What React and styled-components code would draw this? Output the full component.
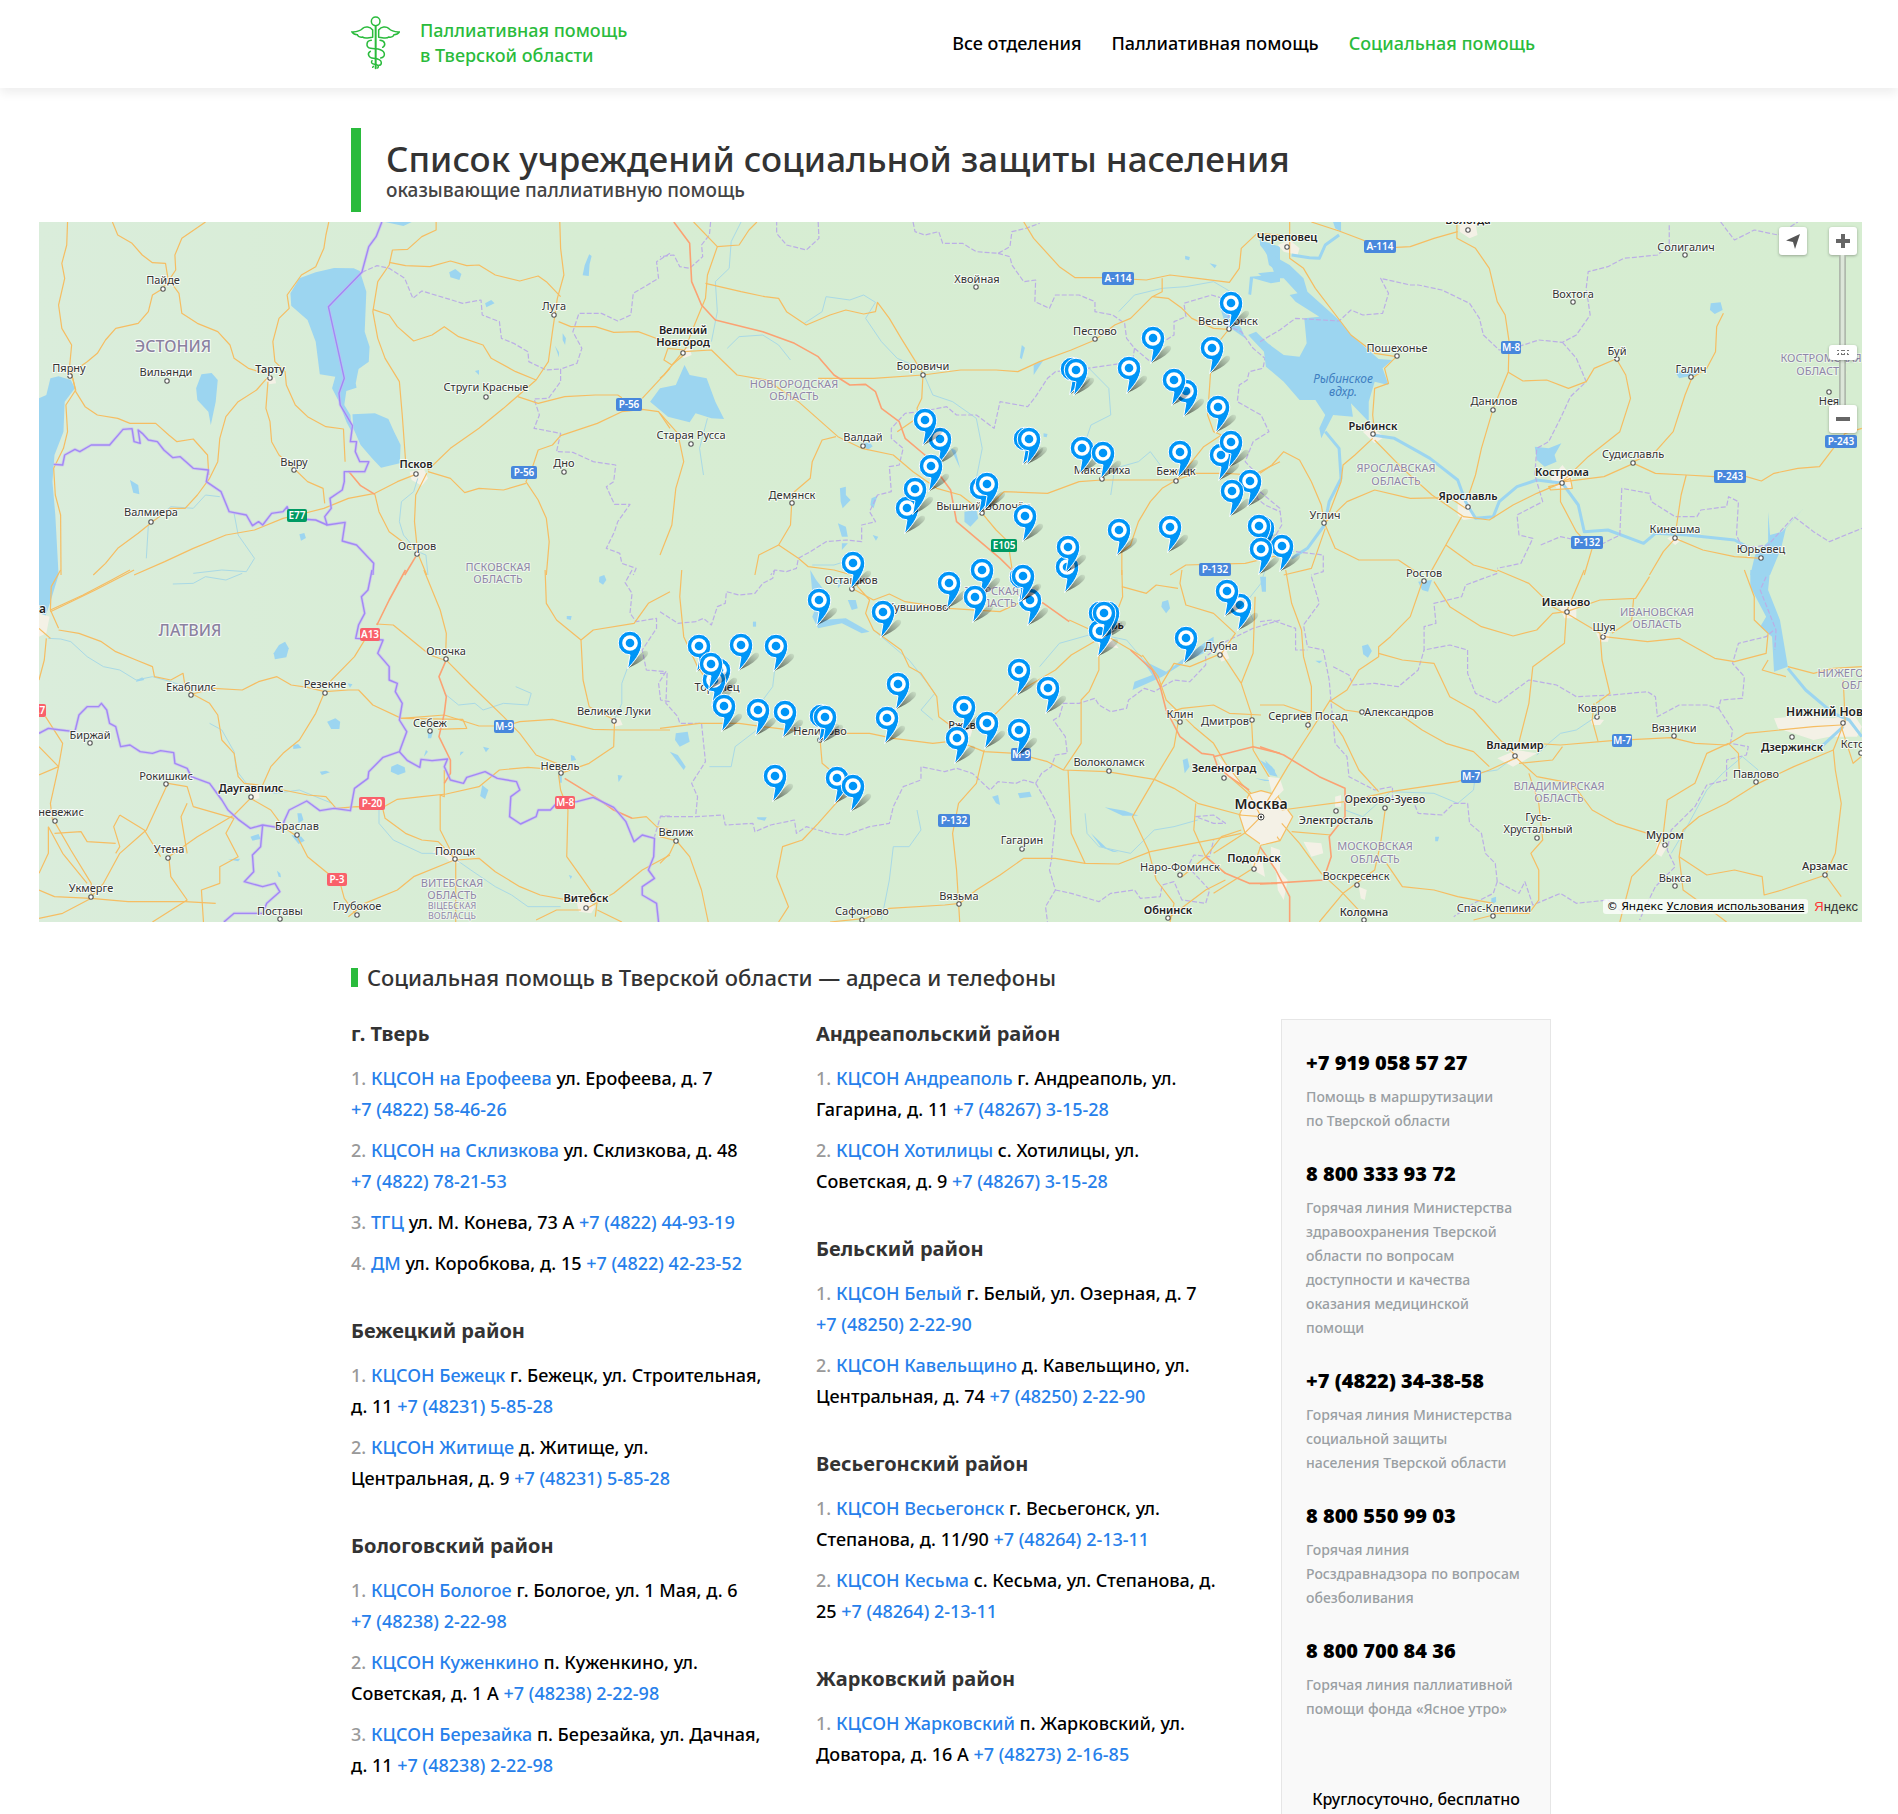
import React, { useState } from "react";
import styled, { createGlobalStyle } from "styled-components";

const GlobalStyle = createGlobalStyle`
  * {
    box-sizing: border-box;
  }
  body {
    margin: 0;
    background: #fff;
    color: #000;
    font-family: "Noto Sans", "Open Sans", sans-serif;
    font-size: 18px;
    font-weight: 500;
  }
  h1, h2, h3, p, ol {
    margin: 0;
    padding: 0;
  }
  a {
    color: inherit;
    text-decoration: none;
  }
`;

const Header = styled.header`
  background: #fff;
  box-shadow: 0 5px 10px rgba(0, 0, 0, 0.07);
`;

const Container = styled.div`
  max-width: 1204px;
  margin: 0 auto;
  padding-left: 4px;
`;

const HeaderRow = styled(Container)`
  display: flex;
  align-items: center;
  justify-content: space-between;
  min-height: 88px;
  padding-bottom: 2px;
`;

const Brand = styled.a`
  display: flex;
  align-items: center;
  gap: 20px;
  color: #2abb3c;
  line-height: 25px;
`;

const BrandMark = styled.svg`
  width: 49px;
  height: 54px;
`;

const Nav = styled.nav`
  display: flex;
  gap: 30px;
  padding-right: 16px;
`;

const NavLink = styled.a`
  color: ${(props) => (props.$active ? "#2abb3c" : "#000")};
`;

const PageTitle = styled.div`
  margin-top: 40px;
  padding: 10px 0 8px 25px;
  border-left: 10px solid #2abb3c;
  height: 84px;
`;

const Title = styled.h1`
  color: #333;
  font-size: 35px;
  font-weight: 500;
  line-height: 42px;
`;

const Subtitle = styled.p`
  color: #444;
  font-size: 19px;
  line-height: 20px;
`;

const MapBox = styled.section`
  position: relative;
  display: flex;
  justify-content: center;
  height: 700px;
  margin: 10px 36px 0 39px;
  overflow: hidden;
  background: #d7edd3;
`;

const MapCanvas = styled.div`
  position: relative;
  flex: none;
  width: 1823px;
  height: 700px;
`;

const MapSvg = styled.svg`
  display: block;
  width: 1823px;
  height: 700px;
`;

const MapText = styled.text`
  font-family: "Noto Sans", sans-serif;
  font-size: ${(props) => props.$size}px;
  font-weight: ${(props) => props.$weight};
  font-style: ${(props) => (props.$italic ? "italic" : "normal")};
  fill: ${(props) => props.$color};
  text-anchor: middle;
  paint-order: stroke;
  stroke: ${(props) => props.$halo};
  stroke-width: 2px;
  stroke-linejoin: round;
`;

const Pin = styled.button`
  position: absolute;
  width: 42px;
  height: 40px;
  padding: 0;
  border: none;
  background: none;
  cursor: pointer;
`;

const MapControls = styled.div`
  position: absolute;
  top: 5px;
  right: 5px;
  display: flex;
  align-items: flex-start;
  gap: 22px;
`;

const ZoomControl = styled.div`
  display: flex;
  flex-direction: column;
  width: 28px;
`;

const MapButton = styled.button`
  display: flex;
  align-items: center;
  justify-content: center;
  width: 28px;
  height: 28px;
  padding: 0;
  border: none;
  border-radius: 3px;
  background: #fff;
  box-shadow: 0 1px 3px rgba(0, 0, 0, 0.3);
  cursor: pointer;
`;

const ZoomSlider = styled.input`
  appearance: none;
  writing-mode: vertical-lr;
  direction: rtl;
  width: 28px;
  height: 150px;
  margin: 0;
  background: linear-gradient(
    to right,
    transparent 10px,
    #a9b3a6 10px,
    #c2cbbf 12px,
    #dce6d9 12px,
    #dce6d9 15px,
    #c2cbbf 15px,
    #a9b3a6 17px,
    transparent 17px
  );
  &::-webkit-slider-thumb {
    appearance: none;
    width: 28px;
    height: 15px;
    border: none;
    border-radius: 3px;
    background:
      radial-gradient(#777 1px, transparent 1px) 8px 4px / 3px 3px no-repeat,
      radial-gradient(#777 1px, transparent 1px) 11px 4px / 3px 3px no-repeat,
      radial-gradient(#777 1px, transparent 1px) 14px 4px / 3px 3px no-repeat,
      radial-gradient(#777 1px, transparent 1px) 17px 4px / 3px 3px no-repeat,
      radial-gradient(#777 1px, transparent 1px) 8px 8px / 3px 3px no-repeat,
      radial-gradient(#777 1px, transparent 1px) 11px 8px / 3px 3px no-repeat,
      radial-gradient(#777 1px, transparent 1px) 14px 8px / 3px 3px no-repeat,
      radial-gradient(#777 1px, transparent 1px) 17px 8px / 3px 3px no-repeat,
      #fff;
    box-shadow: 0 1px 3px rgba(0, 0, 0, 0.3);
  }
`;

const MapCopyright = styled.div`
  position: absolute;
  right: 4px;
  bottom: 8px;
  display: flex;
  align-items: center;
  gap: 6px;
  line-height: 15px;
`;

const CopyrightText = styled.span`
  padding: 0 4px;
  border-radius: 3px;
  background: rgba(255, 255, 255, 0.75);
  font-family: "DejaVu Sans", sans-serif;
  font-size: 11px;
  font-weight: 400;
  a {
    text-decoration: underline;
  }
`;

const YandexLogo = styled.a`
  color: #333;
  font-family: "Liberation Sans", sans-serif;
  font-size: 13px;
  font-weight: 400;
  span {
    color: #f33;
  }
`;

const SectionTitle = styled.h2`
  display: flex;
  align-items: center;
  gap: 9px;
  margin-top: 40px;
  color: #333;
  font-size: 22px;
  font-weight: 500;
  line-height: 30px;
  &::before {
    content: "";
    width: 7px;
    height: 19px;
    background: #2abb3c;
  }
`;

const Content = styled.div`
  display: grid;
  grid-template-columns: 1fr 1fr 270px;
  column-gap: 40px;
  margin-top: 27px;
`;

const Column = styled.div`
  display: flex;
  flex-direction: column;
  gap: 38px;
  padding: 1px 8px 0 0;
`;

const District = styled.h3`
  margin-bottom: 16px;
  color: #333;
  font-size: 20px;
  font-weight: 700;
  line-height: 27px;
`;

const Places = styled.ol`
  display: flex;
  flex-direction: column;
  gap: 10px;
  list-style: none;
  line-height: 31px;
`;

const PlaceNumber = styled.span`
  color: #999;
`;

const PlaceLink = styled.a`
  color: #2680eb;
`;

const Phone = styled(PlaceLink)`
  white-space: nowrap;
`;

const Hotlines = styled.aside`
  display: flex;
  flex-direction: column;
  gap: 27px;
  padding: 29px 24px 0;
  border: 1px solid #e6e6e6;
  border-bottom: none;
  background: #f9f9f9;
`;

const HotlinePhone = styled.a`
  display: block;
  margin-bottom: 8px;
  font-family: "Open Sans", "Noto Sans", sans-serif;
  font-size: 20px;
  font-weight: 800;
  line-height: 28px;
`;

const HotlineText = styled.p`
  padding-right: 6px;
  color: #999fa3;
  font-size: 14px;
  line-height: 24px;
`;

const HotlineNote = styled.p`
  margin-top: 36px;
  font-size: 16px;
  line-height: 30px;
  text-align: center;
`;

// Each tile has its own grid; kx and ky bring it to map pixels.
const tiles = [
  {
    x: -9, y: -7, kx: 640 / 1568, ky: 1 / 3,
    water: [
      "M700 172L745 159L793 160L808 168L824 230L820 350L832 395L830 440L805 462L798 505L800 518L775 528L770 570L785 600L788 650L775 620L757 560L740 520L748 485L710 478L700 380L680 315L640 272L638 235L660 190Z",
      "M790 598L845 595L878 612L892 650L908 690L906 745L860 758L838 730L810 690L792 640Z",
      "M420 478L445 474L460 495L455 560L443 630L437 590L410 555L407 520Z",
      "M22 550L40 540L50 490L70 484L100 495L110 520L85 560L82 650L60 720L55 800L62 900L70 1080L50 1160L22 1260Z",
      "M1027 172l15-10 15 15-5 18-22-8z", "M1370 118l6 5-5 25-2 35-15-2 5-30z", "M1115 265l15-10 8 10-20 12z",
      "M245 795l20 15 3 28-15-5z", "M660 958l12-4 4 15-12 8z", "M1305 355l8 15-2 20-6-15z", "M1286 392l10 20 0 15z", "M1090 468l10-3 0 15z",
      "M870 21L935 21L915 33Z",
    ],
    rivers: [
      "M285 1030L290 930L345 875L400 880L430 840L465 845", "M500 895L510 960L550 1030L530 1070L470 1065L400 1075",
      "M950 790L940 830L910 860L905 920L915 960L950 1010L970 1020L975 1080",
    ],
    roads: [
      "M92 21L90 90L78 145L85 190L70 270L78 340L102 390L97 455L112 525L88 570L92 650L82 700L58 760L62 840L75 900L76 1080",
      "M202 21L215 60L250 85L275 120L300 143L332 145L338 190L365 235L372 295L410 325L460 350L490 390L500 430L535 460L575 475",
      "M430 21L372 70L355 120L357 165L338 200L320 225L300 240L290 290L265 325L210 340L185 375L165 415L140 440L100 475",
      "M732 21L725 60L720 100L700 155L665 180L630 240L635 280L610 310L595 380L600 440L625 470L628 510L650 570L680 605L725 635L768 642L772 740",
      "M105 490L112 530L135 575L165 600L215 610L245 625L308 625L340 660L360 680L400 672L435 720L438 780",
      "M580 490L555 525L510 560L480 605L465 670L460 740L440 790L410 840L380 880L345 880L300 920L265 955L215 1000L185 1045L155 1080",
      "M583 500L578 580L588 620L592 680L610 720L648 762L680 800L718 820L722 865",
      "M255 1080L330 1040L400 1000L480 960L550 945L620 910L655 900L720 880L780 850L845 835L900 800L945 778",
      "M975 765L1030 700L1100 640L1160 580L1240 495L1270 440L1280 350L1292 250L1308 180L1300 100L1298 21",
      "M995 21L995 45L960 65L925 103L888 105L880 150L852 200L840 290L852 370L870 430L905 500L912 600L920 735",
      "M880 142L920 152L980 155L1030 138L1070 152L1100 150L1140 180L1200 198L1245 183L1265 200L1300 245",
      "M840 283L880 300L900 335L940 378L985 360L1015 335L1050 365L1110 390L1130 430L1190 470L1240 495",
      "M1295 320L1325 335L1385 335L1430 352L1490 350L1545 375L1568 380",
      "M1195 545L1245 565L1310 545L1385 540L1440 540L1450 548",
      "M1568 460L1500 550", "M1568 640L1540 590L1500 583L1450 590L1390 625L1300 662L1280 690L1245 705L1230 760L1215 800L1245 855L1265 910L1272 980L1265 1080",
      "M975 770L1030 790L1065 833L1100 820L1160 825L1215 805", "M972 775L945 840L942 920L950 1015L972 1080",
      "M845 838L855 890L880 950L940 1005",
    ],
    highways: ["M780 768L810 812L845 838", "M945 1025L918 1080"],
    borders: [
      "M862 21L848 65L830 95L813 172L731 275L770 490L757 535L760 570L790 632L785 680L800 680L797 710L808 740L830 740L820 770L770 770L770 800L765 825L735 850L738 880L722 905L728 930L772 922L765 978L800 990L842 1045L840 1080",
      "M58 748L80 750L85 720L110 703L122 710L150 690L195 690L228 643L250 641L255 680L270 685L265 645L275 655L290 675L312 680L328 705L350 728L368 725L400 760L437 765L432 800L468 830L488 890L530 900L545 932L560 920L570 930L592 895L620 890L630 875L640 910L700 915L728 930",
    ],
    regions: [
      "M813 172L850 152L880 160L918 190L938 250L960 228L1020 250L1060 265L1105 255L1108 300L1150 320L1155 370L1185 385L1220 410L1222 440L1265 465L1300 462",
      "M1568 115L1535 140L1540 190L1478 235L1472 300L1440 318L1400 295L1345 295L1330 350L1352 400L1340 445L1300 462L1300 500L1270 550L1235 552L1248 600L1235 640L1300 655L1290 710L1330 712L1380 740L1435 750L1430 800L1412 815L1432 868L1470 868L1440 920L1432 950L1412 1000L1445 1015L1450 1045L1485 1060L1478 1080",
    ],
    urban: ["M575 490L600 488L603 505L585 508Z", "M930 770L965 762L975 790L960 812L935 795Z"],
    towns: [[326, 223], [97, 484], [335, 499], [587, 488], [648, 766], [945, 777], [296, 920], [949, 1018], [1283, 301], [1118, 545], [1309, 772]],
    labels: [
      ["Пайде", 326, 196], ["Пярну", 96, 458], ["Вильянди", 334, 471], ["Тарту", 587, 461, "semi"], ["Выру", 648, 740],
      ["Псков", 945, 747, "bold"], ["Валмиера", 296, 891], ["Остров", 949, 992], ["Луга", 1283, 274], ["Струги Красные", 1118, 517],
      ["Дно", 1309, 745], ["ЭСТОНИЯ", 350, 392, "country"], ["ПСКОВСКАЯ", 1147, 1055, "region"], ["ОБЛАСТЬ", 1147, 1091, "region"],
    ],
    shields: [["Р-56", 1468, 567], ["Р-56", 1211, 771], ["E77", 655, 900, "#009a63"]],
  },
  {
    x: -9, y: 348, kx: 640 / 1568, ky: 1 / 3,
    water: [
      "M610 225L625 215L634 235L628 262L600 268L597 250z", "M728 455l20-10 12 10-2 22-20 0z", "M645 525l12-3 8 12-20 3z",
      "M885 590l15-8 18 10 2 15-18 8-18-10z", "M1395 20l12-5 5 15-8 14-10-8z", "M710 605l15-3 10 5-20 8z", "M655 730l10 0 5 20-12 10z",
      "M640 795l25 5 8 12-15 10z", "M540 800l20-8 5 15-20 5z", "M485 868l30-2-5 8z", "M605 902l8 8 2 12-6-2z", "M1108 645l5 5 10 10-8 28-12-10z",
      "M1325 555l8 3 5 12-12 3z", "M1440 615l12 2-10 20z", "M1315 138l12 0-2 12-10-3z", "M975 485l12 0-4 20-8 0z",
      "M1055 545l8 0-10 12z", "M1110 530l15 5-8 12z", "M970 540l5 5-10 15z", "M778 340l12 3-6 10z", "M1295 618l8 0 0 20-6 0z", "M260 332l15-10 5 8-20 5z", "M1320 915l8 3-3 10z",
    ],
    rivers: [
      "M45 205L75 207L100 215L140 260L180 290L220 300L260 330L300 320L345 335L380 350", "M1465 290L1450 340L1450 400L1432 450",
      "M440 460L470 480L500 545L505 600L530 640L600 670L660 660L740 700", "M1045 870L1080 900L1140 950L1180 975L1220 1010L1300 1010",
      "M855 720L855 760L890 810L960 850L1000 850", "M350 42L400 40L430 20L480 30L520 10",
      "M1015 370L1050 405L1090 400L1110 420L1160 400L1220 405L1228 370L1190 350",
    ],
    roads: [
      "M75 0L52 50L50 120L70 175", "M50 120L130 75L200 30L245 0", "M255 0L160 60L50 125",
      "M22 175L50 205", "M70 180L120 190L175 215L210 245L260 270L300 290L305 320L345 330L375 310L380 350L398 372",
      "M398 372L440 400L460 435L470 510L500 550L510 620L525 640L560 645",
      "M398 372L450 355L520 360L560 335L605 320L640 345L680 352L722 365",
      "M722 365L780 360L805 360L840 405L910 445L1015 435L1100 468L1165 468L1200 455L1280 448L1380 478L1450 480L1568 480",
      "M910 445L1060 448L1070 475L1000 478", "M722 365L700 430L660 510L620 550L590 590L570 645", "M825 200L795 260L735 335",
      "M848 162L890 165L935 210L980 255L1015 270", "M965 0L985 60L1005 120L1020 190L1018 268L1080 345L1160 440L1200 490L1240 555L1290 580L1300 605",
      "M1015 600L1015 680L1005 675L1005 780L1040 865", "M40 205L35 270L22 330", "M38 440L80 520L70 590L50 700L55 750",
      "M22 530L70 590L22 615", "M60 755L100 840L150 940L150 980", "M45 770L80 850L140 940", "M60 790L125 785L140 815L210 820",
      "M22 960L60 980L150 985L240 995L380 995L455 1000", "M22 1045L80 1030L150 985", "M22 910L45 850L45 770",
      "M338 640L300 740L285 780L220 850L180 940L150 980", "M338 640L385 650L400 710L500 745", "M340 860L345 920L385 990L300 1056",
      "M340 860L410 800L500 735L540 685", "M540 685L590 720L620 770L655 800L680 860L725 905L760 940L770 985L800 1035",
      "M385 700L370 740L385 850", "M500 745L480 790L510 860L465 890L465 940L420 960L425 1056", "M220 735L280 780L320 860", "M220 735L205 770L220 830L210 850",
      "M560 655L620 660L680 675L725 680L750 715L800 710L865 712L900 688L960 680L1020 672L1100 650L1150 600L1220 592L1300 600",
      "M865 720L870 745L920 790L960 810L1000 815L1040 865", "M1300 610L1370 580L1430 530L1432 455",
      "M1432 450L1370 410L1355 330L1350 210L1380 180L1480 160L1515 100L1568 65", "M1350 210L1290 150L1265 100L1262 0",
      "M1475 745L1510 740L1535 770L1568 780", "M1295 615L1300 660L1318 720L1315 860L1350 920L1390 990L1385 1040",
      "M1045 870L1100 865L1140 905L1200 950L1250 975L1340 995", "M1040 870L940 920L900 960L820 1000L780 1040",
      "M1043 870L1043 1056", "M1365 1015L1430 970L1500 900L1568 855", "M1390 1020L1450 1056", "M1350 1020L1290 1020L1240 1050",
    ],
    highways: [
      "M920 0L880 90L850 165", "M1018 275L1002 320L1020 380L1015 430L1002 500L1030 570L1030 610L1015 640",
      "M1310 625L1390 685L1430 720L1475 745",
    ],
    borders: [
      "M838 0L828 60L812 80L820 130L805 165L798 205L865 210L852 250L880 290L880 330L900 340L895 365L912 400L905 450L923 485L905 545L865 562L830 605L828 625L795 655L785 722L745 715L710 722L678 693L635 720L622 755L620 775L570 765L540 775L510 748L485 720L470 690L440 640L395 620L385 595L355 580L352 548L320 542L300 550L270 545L245 525L222 530L210 470L195 460L188 420L175 400L168 410L140 410L120 435L110 485L75 480L45 475L22 490",
      "M570 765L565 830L545 855L548 905L525 935L570 950L600 940L612 965L580 1000L570 1030L500 1030L475 1056",
      "M905 545L925 572L955 592L958 568L985 572L1023 567L1015 590L1030 630L1062 640L1070 622L1115 605L1145 625L1192 635L1200 660L1178 680L1175 740L1202 762L1240 740L1245 720L1275 720L1290 700L1340 695L1380 682L1430 712L1460 755L1480 815L1500 795L1530 805L1528 860L1515 900L1530 925L1500 950L1500 975L1535 1000L1540 1056",
    ],
    regions: [
      "M1475 0L1458 38L1475 70L1470 130L1485 155L1535 145L1535 175L1500 240L1510 300L1558 305L1540 340L1545 390L1568 395",
      "M1568 738L1545 738L1530 800",
    ],
    urban: [
      "M985 850L1005 825L1050 850L1055 880L1030 875L1015 860Z", "M1340 1000L1365 990L1385 1010L1375 1030L1345 1025Z",
      "M1420 440L1445 445L1452 465L1430 470Z", "M540 655L560 650L562 685L545 690Z", "M22 130L48 140L40 190L22 200Z",
    ],
    towns: [[395, 375], [722, 369], [148, 520], [332, 643], [542, 681], [61, 752], [655, 796], [338, 863], [150, 982], [612, 1048], [800, 1036], [1042, 868], [1018, 268], [979, 484], [1432, 452], [1300, 610], [1362, 1014]],
    labels: [
      ["Екабпилс", 395, 350], ["Резекне", 722, 342], ["Биржай", 147, 494], ["Рокишкис", 332, 618], ["Даугавпилс", 542, 654, "bold"],
      ["Паневежис", 60, 726], ["Браслав", 655, 768], ["Утена", 340, 837], ["Укмерге", 150, 955], ["Поставы", 612, 1022],
      ["Глубокое", 800, 1008], ["Полоцк", 1041, 842], ["Опочка", 1018, 244], ["Себеж", 979, 460], ["Великие Луки", 1432, 424],
      ["Невель", 1298, 587], ["Витебск", 1362, 985, "bold"], ["ЛАТВИЯ", 391, 179, "country"], ["Рига", 5, 118, "city"],
      ["ВИТЕБСКАЯ", 1033, 938, "region"], ["ОБЛАСТЬ", 1033, 974, "region"], ["ВІЦЕБСКАЯ", 1033, 1008, "small"], ["ВОБЛАСЦЬ", 1033, 1038, "small"],
    ],
    shields: [["А13", 833, 192, "#f9606a"], ["М-9", 1161, 468], ["Р-20", 839, 698, "#f9606a"], ["М-8", 1310, 696, "#f9606a"], ["Р-3", 751, 927, "#f9606a"], ["А7", 22, 420, "#f9606a"]],
  },
  {
    x: 621, y: -7, kx: 620 / 1568, ky: 1 / 3,
    water: [
      "M62 450L75 480L118 490L140 560L162 612L130 610L90 595L75 622L20 605L0 585L-25 560L0 520L40 510Z",
      "M1515 75L1568 95L1568 175L1540 150L1535 120Z",
      "M1545 180L1568 182L1568 200L1545 205L1500 190L1495 240L1488 238L1492 185Z",
      "M770 890l30-5 5 25-20 25-15-15z", "M735 700l12 5 12 55-8-20z", "M455 820l15-5 0 25 12 15-20 25-5-20z", "M535 850l15-8-10 38-8-10z",
      "M915 390l8 8-8 35-5-5z", "M945 450l25-15-25 45z", "M1328 122l12 4-2 10-10-3z", "M1390 145l18 5-5 10z", "M450 925l20 10 5 30-15 0z",
      "M538 960l14 5-6 12z", "M515 685l15-3 8 12-14 12z", "M970 655l10 2-2 10-8-2z", "M460 985l15 0-15 20z", "M1415 270L1430 330L1450 345L1480 370L1470 340L1440 300Z",
    ],
    rivers: [
      "M205 21L180 80L175 160L140 200L145 290L130 380", "M170 400L200 365L260 360L300 390L330 435", "M365 325L410 290L420 245L480 255L515 240L545 262L520 310L560 380L600 430L640 450",
      "M668 480L690 540L740 560L800 610L815 700L800 790", "M1085 460L1135 520L1140 600L1090 630L1080 665", "M385 1050L440 1050L480 1035",
      "M1160 290L1200 240L1270 220L1330 215L1400 200L1450 235", "M1140 840L1150 760L1210 740L1240 710L1265 750", "M110 780L100 700L120 610",
    ],
    roads: [
      "M85 21L145 95L200 90L225 45L245 21", "M145 95L120 180L115 250L80 350L65 400L10 480L0 490",
      "M115 205L205 230L265 245L300 250L320 290L370 330L430 300L470 285L515 297L545 290L550 262L580 310L610 370L665 475",
      "M60 410L130 405L195 480L270 495L350 560L450 665L510 700L590 720L640 770L700 820L760 840L815 890",
      "M400 490L540 490L665 480L760 465L850 465L905 470L960 440L1040 405L1100 375L1150 330L1190 310L1245 245L1270 230L1270 190",
      "M665 480L662 550L650 580L655 605L600 650", "M920 21L945 70L1010 155L1050 188L1120 188L1230 195L1290 180L1360 190L1440 202L1465 160L1470 100L1510 55L1568 60",
      "M1245 245L1285 250L1320 280L1345 310L1400 340L1437 343", "M1437 345L1400 400L1392 480L1385 600L1400 650L1420 660L1375 695L1325 770L1306 795",
      "M815 895L870 830L980 835L1060 800L1118 795L1200 795L1306 795L1350 775L1430 775L1500 780L1568 740",
      "M1306 795L1270 820L1240 860L1210 920L1190 990L1168 1010L1168 1080", "M815 895L850 945L880 980L890 1060",
      "M445 665L410 675L385 740L380 790L340 830L333 865L330 930L300 990L250 1020L240 1080", "M300 990L350 1030L375 1055L440 1065L485 1080",
      "M0 595L45 655L60 740L40 820L30 930L0 1020", "M1290 1080L1330 1050L1480 1045L1568 1020", "M60 420L30 450L10 435L20 400L60 405",
    ],
    highways: [
      "M35 21L75 85L80 200L105 270L140 315L260 350L340 385L400 425L440 480L480 510L520 508L545 530L560 580L605 620L620 670L670 720L735 825L750 920L800 970L860 1030L890 1065",
    ],
    borders: [],
    regions: [
      "M128 21L125 60L105 90L108 125L75 160L50 155L35 120L0 125", "M400 21L402 70L370 105L320 90L295 55L295 21",
      "M640 21L645 50L670 60L705 50L715 85L765 85L800 110L855 115L885 95L890 50L925 40L960 25",
      "M855 115L885 125L890 150L920 200L950 195L948 260L985 280L1000 240L1060 240L1100 260L1100 290L1145 300L1175 325L1180 370L1200 400L1195 440L1140 450L1080 460L1000 470L980 490L950 545L930 575L860 560L845 640L800 600L750 600L725 575L660 590L620 595L585 640L585 670L615 700L605 750L580 755L585 830L550 840L530 890L545 920L510 930L510 980L470 975L420 980L380 1010L350 1030L345 1060L320 1070L290 1065L280 1080",
      "M1200 400L1240 440L1260 390L1300 360L1300 320L1330 305L1325 265L1395 240L1450 260L1430 330L1470 350L1500 400L1530 430L1525 460L1490 470L1485 495L1465 510L1460 560L1520 600L1540 650L1500 680L1480 740L1520 790L1510 850L1530 870L1568 890",
    ],
    urban: ["M50 405L75 400L80 420L60 430Z"],
    towns: [[58, 414], [800, 217], [666, 481], [79, 688], [514, 694], [333, 865], [1101, 373], [1438, 343], [1118, 791], [1306, 797], [815, 894]],
    labels: [
      ["Великий", 58, 345, "bold"], ["Новгород", 58, 381, "bold"], ["Хвойная", 801, 192], ["Боровичи", 666, 454], ["Старая Русса", 79, 661],
      ["Валдай", 514, 667], ["Демянск", 333, 839], ["Пестово", 1101, 348], ["Весьегонск", 1436, 317], ["Максатиха", 1118, 766],
      ["Бежецк", 1306, 769], ["Вышний Волочёк", 816, 872], ["НОВГОРОДСКАЯ", 339, 507, "region"], ["ОБЛАСТЬ", 339, 543, "region"],
    ],
    shields: [["А-114", 1158, 189], ["E105", 870, 990, "#009a63"], ["Р-132", 1404, 1063]],
  },
  {
    x: 621, y: 348, kx: 620 / 1568, ky: 1 / 3,
    water: [
      "M395 110L410 150L470 145L530 185L510 190L460 160L400 175L385 140z", "M475 90l20 0 5 25-15 5z",
      "M1220 270L1280 305L1320 270L1380 215L1400 200L1400 235L1330 275L1270 320L1195 360L1200 335L1245 315z",
      "M40 490l30-5 5 30-25 15-12-20z", "M25 545l20 10 20 35-5 10z", "M905 670l30-5 5 15-30 5z", "M840 680l15-5 5 30-10-5z",
      "M1125 712l50 10 35 15-40 0z", "M1270 95l15-5 5 25-10 15-12-20z", "M245 742l25 0-5 10-18-4z", "M235 155l8 0 0 15-8 0z", "M1530 570l25 30 0 12-15-8z",
      "M380 0L395 30L415 60L420 95L385 65Z", "M450 20l15 15 -15 20z", "M1090 790l40 45 30 12-15-2-30-15z", "M1322 570l12-5 5 25-12 20z", "M1505 625l50 8-25 0z",
    ],
    rivers: [
      "M290 300L285 350L260 390L250 420L245 480L190 530L180 590L125 590", "M540 180L610 250L630 270L670 330L695 370L660 420L690 450",
      "M650 720L660 780L630 830L590 830L580 930L560 1050", "M960 290L1010 220L1100 190L1180 210L1230 280", "M1110 830L1190 850L1250 780L1300 770L1360 750",
      "M1500 150L1480 100L1520 40L1530 0", "M1075 730L1080 790L1110 830",
    ],
    roads: [
      "M55 0L50 80L60 200L95 290L130 350", "M0 475L100 460L200 460L260 470L400 490L530 490L590 505L690 520L750 512L820 545L900 550L980 575L1020 600L1130 605L1250 628L1300 655L1360 700L1470 735",
      "M485 0L500 50L530 90L520 130L540 180L610 240L630 290L660 310L700 380L705 440L750 480",
      "M485 55L540 90L580 72L620 95L730 115L860 125L905 100", "M1035 150L1090 180L1140 205L1220 260",
      "M1220 255L1260 320L1280 390L1350 470L1400 520L1430 580", "M1168 0L1170 80L1135 190L1040 255L1000 300L900 370L850 430L790 480",
      "M1110 230L1110 300L1085 365L1065 390L1065 520L1020 600", "M820 540L800 640L755 700L740 790L750 900L758 1056",
      "M758 1000L800 960L860 915L920 865L1000 865L1075 880L1160 882L1240 845L1400 808L1470 790",
      "M405 510L410 580L440 610L460 680L400 760L360 810L310 830L295 920L325 1010L300 1056",
      "M40 810L75 860L105 960L122 1056", "M0 800L40 812L25 850L0 880", "M430 1056L520 1045L580 1015L720 1005L758 1000",
      "M1032 600L1040 790L1075 880", "M1420 250L1340 290L1300 280L1265 350", "M1420 250L1455 190L1400 130L1330 105L1315 40L1320 0",
      "M1420 250L1470 340L1495 430L1500 540", "M1505 80L1500 250L1470 340", "M1310 460L1300 530L1250 628L1195 740L1235 840L1255 930L1300 1000L1290 1056",
      "M1315 460L1280 430L1320 415L1400 405L1440 430L1520 435", "M1320 920L1380 860L1420 800L1470 780", "M1400 970L1500 895L1520 825",
      "M1290 1040L1380 960L1430 930", "M1355 700L1350 780L1380 860L1430 910", "M1168 50L1230 70L1255 45L1310 55",
      "M1520 740L1490 672L1440 620", "M1520 740L1465 735", "M1520 740L1478 790L1400 850", "M1520 740L1522 825", "M1520 740L1565 675", "M1520 740L1568 812",
      "M1500 540L1540 620L1560 675", "M1430 580L1470 640L1495 670", "M1490 672L1520 662L1560 675L1600 740L1568 812L1522 825L1480 790L1465 735Z",
    ],
    highways: [
      "M905 75L970 100L1035 155", "M1190 240L1245 300L1265 350L1280 420L1315 500L1370 550L1400 555L1410 590L1440 620L1490 660",
      "M1400 560L1500 530L1568 550", "M1568 940L1490 940L1430 910L1380 860",
    ],
    borders: [],
    regions: [
      "M290 0L285 25L260 40L240 70L200 75L168 65L165 100L145 110L130 165L110 145L90 155L45 160L0 125",
      "M0 310L18 310L15 400L45 440L50 460L105 460L115 575L80 640L95 680L90 740L160 735L165 765L235 760L240 785L280 765L340 750L345 790L370 770L430 790L470 795L530 770L580 760L590 710L615 650L660 630L660 590L720 605L750 595L790 610L835 660L855 635L900 640L920 630L950 640L965 610L990 590L1000 555L1030 550L1025 500L995 450L1010 440L1020 400L1060 400L1100 385L1110 405L1140 425L1180 415L1185 390L1225 355L1250 365L1300 330L1340 335L1380 285L1380 260L1430 215L1500 175L1568 150",
      "M0 740L90 740", "M950 640L975 690L1000 750L990 870L985 900L1000 960L975 1010L980 1056",
      "M1000 960L1040 970L1110 995L1140 970L1200 960L1215 985L1265 980L1270 945L1300 935L1320 990L1380 1000L1390 960L1335 890L1350 855L1390 860L1400 810",
      "M1355 740L1400 735L1430 760L1400 760Z",
    ],
    urban: [
      "M1490 672L1520 662L1560 675L1600 740L1568 812L1522 825L1480 790L1465 735Z", "M1405 235L1430 235L1440 265L1420 275Z",
      "M1090 190L1130 190L1160 235L1110 225Z", "M1490 860L1520 850L1530 920L1500 900Z", "M760 470L790 480L785 500L765 500Z", "M1410 560L1450 600L1470 640L1430 620Z",
      "M1545 830L1568 840L1568 930L1545 880Z",
    ],
    towns: [[485, 56], [725, 112], [1417, 254], [1316, 457], [1496, 451], [1136, 602], [1427, 625], [916, 836], [1503, 896], [1314, 916], [755, 1003], [512, 1050], [1286, 1045], [41, 812], [405, 511], [145, 350]],
    labels: [
      ["Осташков", 484, 31], ["Кувшиново", 652, 112], ["Дубна", 1418, 227], ["Клин", 1314, 433], ["Дмитров", 1430, 453], ["Торопец", 145, 350],
      ["Нелидово", 404, 483], ["Ржев", 764, 466, "semi"], ["Тверь", 1132, 166, "bold"], ["Волоколамск", 1136, 577], ["Зеленоград", 1427, 594, "bold"],
      ["Гагарин", 916, 809], ["Подольск", 1503, 865, "bold"], ["Наро-Фоминск", 1314, 890], ["Вязьма", 755, 979], ["Сафоново", 512, 1024],
      ["Обнинск", 1284, 1020, "bold"], ["Велиж", 41, 787], ["Москва", 1520, 703, "capital"], ["ТВЕРСКАЯ", 840, 62, "region"], ["ОБЛАСТЬ", 840, 99, "region"],
    ],
    shields: [["Р-132", 743, 750], ["М-9", 912, 553]],
  },
  {
    x: 1221, y: -7, kx: 620 / 1568, ky: 1 / 3,
    water: [
      "M0 70L30 120L75 150L110 190L120 230L200 315L230 360L300 432L335 435L310 460L325 510L290 500L275 560L275 620L230 565L235 605L185 600L155 670L150 640L165 600L140 555L100 555L60 500L15 455L10 410L-30 360L-10 350L20 385L60 420L100 425L118 385L112 310L150 305L90 260L75 240L95 235L60 190L10 190L-5 175L35 170L20 120L0 90Z",
      "M1050 470L1100 465L1110 478L1060 490Z", "M1140 265L1165 262L1170 285L1150 297L1138 285Z", "M695 695L730 700L762 685L745 720L750 740L720 755L700 735Z",
      "M1285 890L1290 960L1320 950L1375 880L1330 940L1318 1000L1290 1080L1240 1080L1252 1020L1285 980Z", "M185 21L205 21L205 50L190 40Z",
    ],
    wide: [
      "M285 660L340 670L400 710L430 730L500 795L520 860L545 910L590 905L605 860L650 815L700 795L765 805L805 870L820 950L880 945L970 985L1000 955L1080 960L1200 975L1240 1000",
      "M80 120L125 128L150 130L165 90L200 60", "M165 650L200 700L205 790L175 860L163 930L120 1000L80 1030",
    ],
    rivers: [],
    roads: [
      "M75 21L75 130L110 160L140 220L203 318L230 360L290 415L345 425L315 460L325 505L290 520L285 600L290 655",
      "M130 21L200 48L260 75L300 100L380 95L440 70L500 50", "M498 21L498 70L545 100L580 160L600 260L620 300L630 380L628 470L590 580L560 700L545 780L525 850",
      "M628 472L665 498L725 495L780 520L825 500L845 460L900 432", "M903 435L925 480L937 550L910 650L830 725L765 800",
      "M1172 295L1155 335L1152 410L1130 460L1092 490L1075 540L1045 650L1000 710L945 740",
      "M945 745L1000 775L1078 780L1150 785L1230 785L1268 798L1300 775L1360 760L1415 755L1450 700L1480 655L1522 640",
      "M945 745L870 785L770 800L700 835L640 870L580 915L515 905L435 840L360 760L290 675", "M1078 780L1065 840L1050 960",
      "M163 925L220 860L290 825L380 850L480 848L520 880", "M285 670L240 720L210 750L205 800L165 925",
      "M165 930L190 1000L250 1035L350 1035L400 1075", "M510 905L470 990L430 1075", "M470 990L540 1050L600 1070",
      "M760 805L760 860L800 950L840 1000L820 1080", "M1050 970L1020 1010L985 1080", "M1050 970L1120 1005L1200 1025L1268 1030",
      "M0 775L30 750L60 710L100 735L130 800L155 870L163 925", "M765 805L730 815L735 825L790 820L785 790L765 800", "M165 940L130 1060L60 1080",
    ],
    highways: [],
    borders: [],
    regions: [
      "M0 380L50 345L90 310L200 318L230 285L260 300L310 295L325 235L305 190L380 210L400 210L460 225L530 265L555 310L565 360L605 405L640 400L705 375L765 382L800 360L835 300L825 220L830 170L880 155L920 130L1005 120L1035 90L1035 30",
      "M765 382L800 430L825 500L785 545L760 610L730 680L700 700L695 780L715 860L650 900L655 960L690 970L660 1045L600 1060",
      "M1165 21L1200 75L1250 45L1310 60L1360 21", "M710 990L760 965L860 990L910 960L915 820L985 835L990 860L1050 905L1105 905L1115 885L1180 875L1185 845L1210 860L1205 960L1220 1000L1285 990L1350 905L1400 950L1440 980L1522 940",
      "M0 830L50 880L55 930L20 1000L160 1020L160 1070L130 1080",
    ],
    urban: ["M505 30L545 25L550 60L530 70L505 50Z", "M45 90L75 75L100 100L95 120L60 110Z", "M500 850L525 845L545 910L515 915L500 900Z", "M735 790L765 750L790 790L785 820L750 820Z", "M260 650L285 640L315 665L290 685Z", "M1030 970L1050 958L1065 975L1050 990Z"],
    towns: [[69, 97], [526, 45], [1076, 121], [792, 262], [347, 424], [903, 433], [1091, 487], [590, 586], [287, 658], [1440, 532], [944, 745], [764, 803], [526, 876], [163, 925], [1050, 968], [1268, 1030]],
    labels: [
      ["Череповец", 69, 66, "bold"], ["Вологда", 526, 16, "bold"], ["Солигалич", 1077, 97], ["Вохтога", 792, 237], ["Пошехонье", 347, 398],
      ["Буй", 903, 407], ["Галич", 1091, 462], ["Данилов", 591, 559], ["Рыбинск", 287, 634, "bold"], ["Нея", 1440, 559], ["Судиславль", 944, 718],
      ["Кострома", 764, 771, "bold"], ["Ярославль", 526, 843, "bold"], ["Углич", 164, 901], ["Кинешма", 1050, 943], ["Юрьевец", 1266, 1003],
      ["Рыбинское", 211, 492, "water"], ["вдхр.", 211, 530, "water"], ["ЯРОСЛАВСКАЯ", 345, 760, "region"], ["ОБЛАСТЬ", 345, 797, "region"],
      ["КОСТРОМСКАЯ", 1420, 430, "region"], ["ОБЛАСТЬ", 1420, 467, "region"],
    ],
    shields: [["А-114", 304, 93], ["М-8", 634, 396], ["Р-243", 1469, 678], ["Р-243", 1188, 784], ["Р-132", 826, 981]],
  },
  {
    x: 1221, y: 348, kx: 620 / 1568, ky: 1 / 3,
    water: [
      "M1240 0L1290 0L1285 60L1315 150L1335 290L1300 305L1295 200L1265 170L1280 140L1240 50z", "M400 35L435 30L425 65L410 60z",
      "M258 228l15-5 10 20-10 20-12-10z", "M0 570l30 20 15 30-20-5z", "M0 20l15 0 0 45-10 0z", "M585 985l12-5 0 15-12 10z", "M140 272l18 0-8 8z", "M443 800l10 0-3 14-7 0z",
    ],
    wide: ["M1335 295L1380 360L1450 430L1490 450L1522 500", "M1475 470L1420 530L1395 525"],
    rivers: ["M700 555L730 520L760 490L800 480L850 440L860 385", "M645 560L600 600L545 610L540 660L500 700L440 670L330 665L260 740L215 720", "M1040 850L1080 770L1130 660L1170 610L1220 560L1260 600"],
    roads: [
      "M65 0L80 100L105 180L110 260L130 350L130 420L120 480", "M440 35L480 110L560 170L640 198L700 180L740 130L775 125",
      "M412 30L380 140L330 200L300 230L300 260L250 300L220 360L175 395L130 480L70 590L15 700",
      "M300 250L360 270L440 280L480 380L540 420L615 520L645 555", "M175 390L215 420L260 428", "M350 430L410 480L470 520L540 545L580 590",
      "M600 0L680 40L740 110L770 130", "M820 0L775 125L770 220L690 290L680 400L650 540", "M775 125L860 90L950 85L985 20",
      "M775 130L860 190L865 270L885 370L850 400", "M870 200L980 215L1060 205L1150 265L1200 275L1280 250L1285 190L1250 150L1250 80L1225 0",
      "M945 85L940 150L890 190", "M55 720L215 695L330 665L500 635L580 600L645 565", "M690 520L760 525L890 512L1040 503L1100 520L1180 525L1230 490L1400 470L1470 465",
      "M645 560L700 620L790 640L840 720L900 760L980 790", "M655 580L740 570L765 530", "M845 400L840 450L855 515",
      "M0 405L60 405L120 430", "M175 440L210 500L250 600L300 665", "M55 760L100 820L155 910L210 970L265 1040", "M80 785L180 795",
      "M317 715L305 820L290 900L210 970L150 1056", "M320 880L360 950L440 960L500 980L590 1000", "M590 1035L540 1050", "M590 1030L680 1030L705 990L705 900L685 850L715 810L705 700L680 610",
      "M1475 465L1450 540L1455 600L1470 700L1455 850L1430 915", "M1470 470L1500 580L1520 560", "M1450 540L1350 590L1260 640L1180 700L1110 740L1070 780L1060 860L1070 960L1140 1020L1180 1056",
      "M1185 520L1130 550L1100 640L1030 690L1020 790L1000 850L940 920L910 1056", "M1060 860L1130 915L1200 900L1270 920L1275 975L1320 960L1430 915L1470 980",
      "M1335 290L1400 310L1450 295L1522 290", "M1330 320L1270 300L1285 270", "M1185 520L1210 550L1212 600", "M1480 455L1475 330",
    ],
    highways: ["M0 530L60 555L150 620L215 655L215 740L175 800L180 860L160 930L0 942", "M0 830L40 900L75 980L75 1056"],
    borders: [],
    regions: [
      "M130 20L150 100L110 165L120 230L160 240L175 330L180 400L190 520L220 560L225 620L290 660L335 650L335 685L390 700L400 730L460 735L490 700L525 700L530 760L560 790L570 850L595 880L600 935L655 970L670 935L690 1005L760 970L800 1000L880 990L920 1030",
      "M600 10L520 45L510 80L440 100L445 160L415 170L415 240L480 225L525 240L525 310L545 370L600 400L680 330L750 345L800 380L890 375L980 365L1000 380L1005 440L1060 405L1130 405L1160 415L1165 390L1220 385L1225 320L1195 280L1210 220L1280 200L1300 180",
      "M185 290L225 315L235 345L290 340L350 350L400 300L415 240",
      "M1160 415L1195 480L1190 520L1235 530L1230 555L1180 570L1180 630L1130 645L1100 710L1040 780L1030 840L1050 890L1000 950L975 1010L960 1050",
      "M0 155L30 150L90 175L90 240L120 240", "M600 935L590 970L540 1000L490 1040", "M1280 20L1265 60L1305 180L1302 240",
    ],
    urban: [
      "M1300 445L1360 438L1450 445L1500 430L1522 470L1510 500L1440 500L1400 510L1310 475z", "M0 665L40 700L55 760L40 810L0 825Z",
      "M600 565L650 540L700 550L640 590z", "M755 105L800 110L800 145L770 145z", "M20 620L50 625L60 660L35 690z", "M110 815L155 820L160 850L130 860z",
      "M850 190L885 190L880 215L860 215Z", "M1005 815L1030 830L1015 860L1000 850Z", "M190 680L205 675L205 710L190 710Z", "M40 890L70 930L60 990L45 960Z", "M250 950L270 960L265 990L255 985Z", "M835 445L870 450L860 465L840 465Z",
    ],
    towns: [[415, 34], [776, 126], [868, 200], [259, 425], [122, 466], [853, 442], [1048, 499], [644, 558], [1474, 459], [1346, 502], [1520, 548], [1255, 637], [317, 715], [193, 724], [701, 805], [1023, 824], [1050, 949], [1430, 916], [246, 946], [264, 1051], [590, 1039]],
    labels: [
      ["Ростов", 415, 10], ["Иваново", 775, 97, "bold"], ["Шуя", 869, 172], ["Александров", 352, 426], ["Сергиев Посад", 121, 438], ["Ковров", 852, 415],
      ["Вязники", 1048, 474], ["Владимир", 644, 525, "bold"], ["Нижний Новгород", 1471, 425, "city"], ["Дзержинск", 1346, 531, "bold"], ["Кстово", 1516, 522],
      ["Павлово", 1255, 612], ["Орехово-Зуево", 316, 687, "semi"], ["Электросталь", 193, 749, "semi"], ["Гусь-", 703, 742], ["Хрустальный", 703, 777],
      ["Муром", 1023, 796, "semi"], ["Выкса", 1050, 924], ["Арзамас", 1429, 889, "semi"], ["Воскресенск", 244, 919], ["Коломна", 263, 1027, "semi"],
      ["Спас-Клепики", 591, 1014], ["ИВАНОВСКАЯ", 1003, 125, "region"], ["ОБЛАСТЬ", 1003, 161, "region"], ["ВЛАДИМИРСКАЯ", 757, 649, "region"],
      ["ОБЛАСТЬ", 757, 685, "region"], ["МОСКОВСКАЯ", 291, 829, "region"], ["ОБЛАСТЬ", 291, 866, "region"], ["НИЖЕГОРОДСКАЯ", 1532, 310, "region"], ["ОБЛАСТЬ", 1532, 346, "region"],
    ],
    shields: [["М-7", 915, 511], ["М-7", 533, 617]],
  },
];

// tile index, x, y of the pin head
const pins = [
  [2, 1443, 265], [2, 1248, 370], [2, 1397, 400], [2, 1042, 462], [2, 1053, 465], [2, 1187, 460], [2, 1330, 527], [2, 1301, 496],
  [2, 1410, 576], [2, 709, 672], [2, 669, 616], [2, 924, 672], [2, 934, 673], [2, 1068, 700], [2, 1121, 714], [2, 1316, 711],
  [2, 1420, 720], [2, 1443, 682], [2, 686, 752], [2, 1493, 799], [2, 813, 820], [2, 828, 807], [2, 624, 878], [2, 646, 822],
  [2, 1447, 827], [2, 922, 903], [2, 1524, 940], [2, 1514, 933], [2, 1291, 936], [2, 1162, 944], [4, 55, 994], [2, 1521, 1001],
  [2, 1030, 1055], [2, 1033, 996], [2, 489, 1045], [3, 815, 0], [3, 732, 38], [3, 796, 80], [3, 936, 90], [3, 914, 22], [3, 918, 17],
  [3, 1468, 106], [3, 1433, 64], [3, 403, 90], [3, 565, 125], [3, 1132, 130], [3, 1114, 128], [3, 1114, 183], [3, 1124, 128], [3, 1331, 204],
  [0, 1471, 1283], [3, 98, 228], [3, 206, 226], [3, 294, 228], [3, 148, 300], [3, 137, 330], [3, 130, 283], [3, 907, 300], [3, 982, 354],
  [3, 603, 342], [3, 161, 409], [3, 249, 420], [3, 317, 426], [3, 408, 438], [3, 418, 440], [3, 573, 444], [3, 770, 411],
  [3, 826, 459], [3, 907, 481], [3, 752, 505], [3, 292, 619], [3, 447, 624], [3, 487, 648],
];

const labelStyles = {
  town: { $size: 11, $weight: 400, $color: "#333", $halo: "#ffffffcc" },
  semi: { $size: 11, $weight: 500, $color: "#333", $halo: "#ffffffcc" },
  bold: { $size: 11, $weight: 600, $color: "#222", $halo: "#ffffffcc" },
  city: { $size: 12, $weight: 600, $color: "#222", $halo: "#ffffffcc" },
  capital: { $size: 14, $weight: 600, $color: "#222", $halo: "#ffffffcc" },
  country: { $size: 16, $weight: 500, $color: "#8b82a0", $halo: "#ffffffcc" },
  region: { $size: 11, $weight: 400, $color: "#8f86a8", $halo: "#ffffff88" },
  small: { $size: 9, $weight: 400, $color: "#8f86a8", $halo: "#ffffff88" },
  water: { $size: 12, $weight: 400, $color: "#3f7fc1", $halo: "#9dd5f0", $italic: true },
};

const toMap = (tile, x, y) => [
  Math.round(tile.x + x * tile.kx),
  Math.round(tile.y + y * tile.ky),
];

const lines = (paths, stroke, width, extra) =>
  (paths || []).map((d) => (
    <path
      key={d}
      d={d}
      fill="none"
      stroke={stroke}
      strokeWidth={width}
      strokeLinejoin="round"
      vectorEffect="non-scaling-stroke"
      {...extra}
    />
  ));

const TileShapes = ({ tile }) => (
  <g transform={`translate(${tile.x} ${tile.y}) scale(${tile.kx} ${tile.ky})`}>
    {tile.urban.map((d) => <path key={d} d={d} fill="#f4f1e6" />)}
    {tile.water.map((d) => <path key={d} d={d} fill="#9cd5f0" />)}
    {lines(tile.rivers, "#a9d9e6", 1)}
    {lines(tile.wide, "#9cd5f0", 3)}
    {lines(tile.regions, "#bbaee6", 1.2, { strokeDasharray: "5 2" })}
    {lines(tile.roads, "#f6bd62", 1.2)}
    {lines(tile.highways, "#fba273", 1.6)}
    {lines(tile.borders, "#c9b8f7", 3, { opacity: 0.6 })}
    {lines(tile.borders, "#a288f5", 1.4)}
  </g>
);

const TileLabels = ({ tile }) => (
  <g>
    {tile.towns.map(([x, y]) => {
      const [cx, cy] = toMap(tile, x, y);
      return <circle key={`${x}-${y}`} cx={cx} cy={cy} r="2.2" fill="#fff" stroke="#555" strokeWidth="1.1" />;
    })}
    {tile.labels.map(([text, x, y, kind = "town"]) => {
      const [cx, cy] = toMap(tile, x, y);
      const look = labelStyles[kind];
      return (
        <MapText key={`${text}-${x}-${y}`} x={cx} y={cy + Math.round(look.$size * 0.36)} {...look}>
          {text}
        </MapText>
      );
    })}
    {tile.shields.map(([text, x, y, color = "#4787dc"]) => {
      const [cx, cy] = toMap(tile, x, y);
      const width = text.length * 6 + 2;
      return (
        <g key={`${text}-${x}`}>
          <rect x={cx - width / 2} y={cy - 6} width={width} height="13" rx="2" fill={color} />
          <MapText x={cx} y={cy + 4} $size={10} $weight={600} $color="#fff" $halo="none">
            {text}
          </MapText>
        </g>
      );
    })}
  </g>
);

const PinIcon = () => (
  <svg width="42" height="40" viewBox="0 0 42 40" aria-hidden="true">
    <path d="M11 38C18 31 22 24 27 21C31 20 33 23 29 27C24 32 18 35 11 38Z" fill="url(#pinShadow)" />
    <path
      d="M13 1.2A11.8 11.8 0 0 0 13 24.8L10.6 38.6C16 33 24.8 23 24.8 13A11.8 11.8 0 0 0 13 1.2Z"
      fill="#0095f7"
      stroke="#fff"
      strokeWidth="1"
    />
    <circle cx="13" cy="13" r="7.8" fill="#fff" />
    <circle cx="13" cy="13" r="4.3" fill="#0095f7" />
  </svg>
);

const RegionMap = () => {
  const [zoom, setZoom] = useState(7);

  return (
    <MapBox aria-label="Карта учреждений">
      <MapCanvas>
        <MapSvg viewBox="0 0 1823 700">
          <defs>
            <linearGradient id="pinShadow" x1="0" y1="1" x2="1" y2="0">
              <stop offset="0" stopColor="#000" stopOpacity="0.6" />
              <stop offset="1" stopColor="#000" stopOpacity="0.05" />
            </linearGradient>
            <linearGradient id="land" x1="0" y1="0" x2="1" y2="0">
              <stop offset="0" stopColor="#daeddb" />
              <stop offset="0.3" stopColor="#d7edd3" />
              <stop offset="1" stopColor="#d6edd1" />
            </linearGradient>
          </defs>
          <rect width="1823" height="700" fill="url(#land)" />
          {tiles.map((tile, i) => <TileShapes key={i} tile={tile} />)}
          {tiles.map((tile, i) => <TileLabels key={i} tile={tile} />)}
          <circle cx="1222" cy="595" r="3" fill="#fff" stroke="#444" />
          <circle cx="1222" cy="595" r="1.2" fill="#444" />
        </MapSvg>
        {pins.map(([index, x, y], i) => {
          const [left, top] = toMap(tiles[index], x, y);
          return (
            <Pin key={i} type="button" aria-label={`Учреждение ${i + 1}`} style={{ left: left - 13, top: top - 13 }}>
              <PinIcon />
            </Pin>
          );
        })}
      </MapCanvas>
      <MapControls>
        <MapButton type="button" aria-label="Моё местоположение">
          <svg width="16" height="16" viewBox="0 0 16 16" fill="#555">
            <path d="M15 1L10 16L8 9L1 7.5Z" />
          </svg>
        </MapButton>
        <ZoomControl>
          <MapButton type="button" aria-label="Приблизить" onClick={() => setZoom(Math.min(21, zoom + 1))}>
            <svg width="14" height="14" viewBox="0 0 14 14" fill="#666">
              <path d="M5 0H9V5H14V9H9V14H5V9H0V5H5Z" />
            </svg>
          </MapButton>
          <ZoomSlider
            type="range"
            min="0"
            max="21"
            value={zoom}
            aria-label="Масштаб"
            onChange={(e) => setZoom(Number(e.target.value))}
          />
          <MapButton type="button" aria-label="Отдалить" onClick={() => setZoom(Math.max(0, zoom - 1))}>
            <svg width="14" height="14" viewBox="0 0 14 14" fill="#666">
              <path d="M0 5H14V9H0Z" />
            </svg>
          </MapButton>
        </ZoomControl>
      </MapControls>
      <MapCopyright>
        <CopyrightText>
          © Яндекс <a href="#terms">Условия использования</a>
        </CopyrightText>
        <YandexLogo href="#yandex">
          <span>Я</span>ндекс
        </YandexLogo>
      </MapCopyright>
    </MapBox>
  );
};

const leftDistricts = [
  {
    name: "г. Тверь",
    places: [
      ["КЦСОН на Ерофеева", "ул. Ерофеева, д. 7", "+7 (4822) 58-46-26"],
      ["КЦСОН на Склизкова", "ул. Склизкова, д. 48", "+7 (4822) 78-21-53"],
      ["ТГЦ", "ул. М. Конева, 73 А", "+7 (4822) 44-93-19"],
      ["ДМ", "ул. Коробкова, д. 15", "+7 (4822) 42-23-52"],
    ],
  },
  {
    name: "Бежецкий район",
    places: [
      ["КЦСОН Бежецк", "г. Бежецк, ул. Строительная, д. 11", "+7 (48231) 5-85-28"],
      ["КЦСОН Житище", "д. Житище, ул. Центральная, д. 9", "+7 (48231) 5-85-28"],
    ],
  },
  {
    name: "Бологовский район",
    places: [
      ["КЦСОН Бологое", "г. Бологое, ул. 1 Мая, д. 6", "+7 (48238) 2-22-98"],
      ["КЦСОН Куженкино", "п. Куженкино, ул. Советская, д. 1 А", "+7 (48238) 2-22-98"],
      ["КЦСОН Березайка", "п. Березайка, ул. Дачная, д. 11", "+7 (48238) 2-22-98"],
    ],
  },
];

const rightDistricts = [
  {
    name: "Андреапольский район",
    places: [
      ["КЦСОН Андреаполь", "г. Андреаполь, ул. Гагарина, д. 11", "+7 (48267) 3-15-28"],
      ["КЦСОН Хотилицы", "с. Хотилицы, ул. Советская, д. 9", "+7 (48267) 3-15-28"],
    ],
  },
  {
    name: "Бельский район",
    places: [
      ["КЦСОН Белый", "г. Белый, ул. Озерная, д. 7", "+7 (48250) 2-22-90"],
      ["КЦСОН Кавельщино", "д. Кавельщино, ул. Центральная, д. 74", "+7 (48250) 2-22-90"],
    ],
  },
  {
    name: "Весьегонский район",
    places: [
      ["КЦСОН Весьегонск", "г. Весьегонск, ул. Степанова, д. 11/90", "+7 (48264) 2-13-11"],
      ["КЦСОН Кесьма", "с. Кесьма, ул. Степанова, д. 25", "+7 (48264) 2-13-11"],
    ],
  },
  {
    name: "Жарковский район",
    places: [
      ["КЦСОН Жарковский", "п. Жарковский, ул. Доватора, д. 16 А", "+7 (48273) 2-16-85"],
    ],
  },
];

const hotlines = [
  ["+7 919 058 57 27", "Помощь в маршрутизации по\u00a0Тверской области"],
  ["8 800 333 93 72", "Горячая линия Министерства здравоохранения Тверской области по вопросам доступности и качества оказания медицинской помощи"],
  ["+7 (4822) 34-38-58", "Горячая линия Министерства социальной защиты населения Тверской области"],
  ["8 800 550 99 03", "Горячая линия Росздравнадзора по вопросам обезболивания"],
  ["8 800 700 84 36", "Горячая линия паллиативной помощи фонда «Ясное утро»"],
];

const telHref = (phone) => `tel:${phone.replace(/[^+\d]/g, "")}`;

const Districts = ({ items }) => (
  <Column>
    {items.map((district) => (
      <section key={district.name}>
        <District>{district.name}</District>
        <Places>
          {district.places.map(([name, address, phone], i) => (
            <li key={name}>
              <PlaceNumber>{i + 1}.</PlaceNumber> <PlaceLink href="#place">{name}</PlaceLink> {address}{" "}
              <Phone href={telHref(phone)}>{phone}</Phone>
            </li>
          ))}
        </Places>
      </section>
    ))}
  </Column>
);

function App() {
  return (
    <>
      <GlobalStyle />
      <Header>
        <HeaderRow>
          <Brand href="#">
            <BrandMark viewBox="15 12 147 162" fill="none" stroke="#2abb3c" strokeWidth="4.5" strokeLinecap="round" aria-hidden="true">
              <circle cx="89" cy="28" r="13" />
              <path d="M89 42V169" strokeWidth="6" />
              <path d="M80 76V54C72 44 58 42 49 50C40 59 30 59 18 60C22 66 28 68 34 68C36 75 44 76 50 75C56 82 70 76 80 76" />
              <path d="M98 76V54C106 44 120 42 129 50C138 59 148 59 160 60C156 66 150 68 144 68C142 75 134 76 128 75C122 82 108 76 98 76" />
              <path d="M76 85C60 86 58 106 74 109C84 111 94 110 103 113C120 119 118 136 104 138" />
              <path d="M102 85C118 86 120 100 110 106" />
              <path d="M73 118C62 124 68 138 82 139C94 140 106 142 106 152C106 158 102 160 98 160" />
              <path d="M78 146C74 152 78 156 86 157C96 158 100 163 95 168" />
              <path d="M82 163L80 166" />
            </BrandMark>
            <span>
              Паллиативная помощь
              <br />в Тверской области
            </span>
          </Brand>
          <Nav>
            <NavLink href="#all">Все отделения</NavLink>
            <NavLink href="#palliative">Паллиативная помощь</NavLink>
            <NavLink href="#social" $active>
              Социальная помощь
            </NavLink>
          </Nav>
        </HeaderRow>
      </Header>
      <main>
        <Container>
          <PageTitle>
            <Title>Список учреждений социальной защиты населения</Title>
            <Subtitle>оказывающие паллиативную помощь</Subtitle>
          </PageTitle>
        </Container>
        <RegionMap />
        <Container>
          <SectionTitle>Социальная помощь в Тверской области — адреса и телефоны</SectionTitle>
          <Content>
            <Districts items={leftDistricts} />
            <Districts items={rightDistricts} />
            <Hotlines>
              {hotlines.map(([phone, text]) => (
                <div key={phone}>
                  <HotlinePhone href={telHref(phone)}>{phone}</HotlinePhone>
                  <HotlineText>{text}</HotlineText>
                </div>
              ))}
              <HotlineNote>Круглосуточно, бесплатно</HotlineNote>
            </Hotlines>
          </Content>
        </Container>
      </main>
    </>
  );
}

export default App;
